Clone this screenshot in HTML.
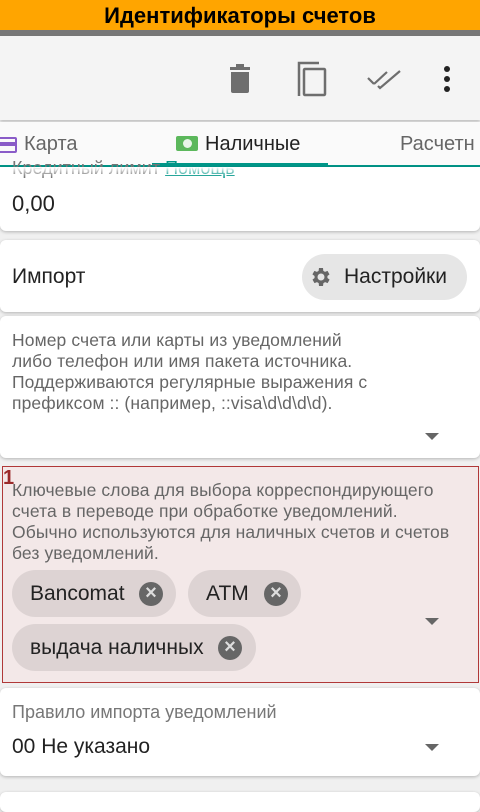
<!DOCTYPE html>
<html><head><meta charset="utf-8"><style>
*{margin:0;padding:0;box-sizing:border-box}
body{width:480px;height:800px;overflow:hidden;background:#f0f0f0;font-family:"Liberation Sans","DejaVu Sans",sans-serif;position:relative}
.a{position:absolute}
.card{position:absolute;left:0;width:480px;background:#fff;border-radius:6px;box-shadow:0 1px 3px rgba(0,0,0,.25)}
.t{position:absolute;white-space:nowrap}
.arr{position:absolute;width:0;height:0;border-left:7px solid transparent;border-right:7px solid transparent;border-top:7px solid #666}
.chip{position:absolute;height:47px;border-radius:24px;background:#ddd3d3;font-size:21px;color:#222;line-height:47px;padding-left:18px}
.x{position:absolute;top:12px;width:24px;height:24px;border-radius:50%;background:#666;color:#ddd;font-size:20px;line-height:23px;text-align:center;font-weight:bold}
.desc{font-size:17.5px;line-height:21px;color:#666;letter-spacing:0.1px}
</style></head><body>
<div class="a" style="left:0;top:0;width:480px;height:30px;background:#ffa500;text-align:center;font-size:22px;font-weight:bold;line-height:32px;color:#000">Идентификаторы счетов</div>
<div class="a" style="left:0;top:30px;width:480px;height:6px;background:#777"></div>
<div class="a" style="left:0;top:36px;width:480px;height:84px;background:#f4f4f4;box-shadow:0 2px 3px rgba(0,0,0,.2)"></div>
<svg class="a" style="left:0;top:36px" width="480" height="84">
<g fill="#6e6e6e">
<rect x="230" y="31" width="20" height="3"/><rect x="236" y="28" width="8" height="3"/>
<path d="M231 36h18v19a2 2 0 0 1-2 2h-14a2 2 0 0 1-2-2z"/>
</g>
<g fill="none" stroke="#6e6e6e" stroke-width="2.5">
<path d="M299 60V27h20"/><rect x="304" y="33" width="21" height="26" rx="1"/>
<path d="M368 42l6 6M374 48l13-12M378 50l2 2 20-17" stroke-width="2.2"/>
</g>
<g fill="#222"><circle cx="447" cy="33" r="3"/><circle cx="447" cy="43" r="3"/><circle cx="447" cy="53" r="3"/></g>
</svg>
<div class="a" style="left:0;top:122px;width:480px;height:45px;background:#fafafa"></div>
<div class="a" style="left:-2px;top:137px;width:19px;height:16px;border:2px solid #8a5cc8;border-radius:2px"><div style="margin-top:3px;height:4px;background:#8a5cc8"></div></div>
<div class="t" style="left:24px;top:133px;font-size:20px;color:#666">Карта</div>
<div class="a" style="left:176px;top:136px;width:22px;height:15px;background:#5cb85c;border-radius:2px"><div style="margin:3px auto;width:9px;height:9px;border-radius:50%;background:#e8f5e8"></div></div>
<div class="t" style="left:205px;top:133px;font-size:20px;color:#222">Наличные</div>
<div class="t" style="left:400px;top:133px;font-size:20px;color:#666">Расчетн</div>
<div class="a" style="left:0;top:165px;width:480px;height:2px;background:#009688"></div>
<div class="a" style="left:152px;top:163px;width:176px;height:3px;background:#009688"></div>
<div class="card" style="top:167px;height:64px;border-radius:0 0 6px 6px">
<div class="t" style="left:12px;top:-9px;font-size:18px;color:#777">Кредитный лимит <span style="color:#009688;text-decoration:underline">Помощь </span></div>
<div class="t" style="left:12px;top:24px;font-size:22px;color:#222">0,00</div>
</div>
<div class="a" style="left:0;top:167px;width:480px;height:10px;background:linear-gradient(#fff,rgba(255,255,255,0))"></div>
<div class="card" style="top:240px;height:72px">
<div class="t" style="left:12px;top:25px;font-size:21px;color:#222">Импорт</div>
<div class="a" style="left:302px;top:14px;width:165px;height:46px;border-radius:23px;background:#e6e6e6"></div>
<svg class="a" style="left:308px;top:25px" width="24" height="24" viewBox="0 0 24 24"><path fill="#666" d="M19.4 13a7.5 7.5 0 0 0 0-2l2.1-1.6-2-3.5-2.5 1a7 7 0 0 0-1.7-1L15 3h-4l-.4 2.9a7 7 0 0 0-1.7 1l-2.5-1-2 3.5L6.6 11a7.5 7.5 0 0 0 0 2l-2.1 1.6 2 3.5 2.5-1a7 7 0 0 0 1.7 1L11 21h4l.4-2.9a7 7 0 0 0 1.7-1l2.5 1 2-3.5zM13 15.5a3.5 3.5 0 1 1 0-7 3.5 3.5 0 0 1 0 7z"/></svg>
<div class="t" style="left:344px;top:25px;font-size:21px;color:#222">Настройки</div>
</div>
<div class="card" style="top:316px;height:142px">
<div class="a desc" style="left:12px;top:14px">Номер счета или карты из уведомлений<br>либо телефон или имя пакета источника.<br>Поддерживаются регулярные выражения с<br>префиксом :: (например, ::visa\d\d\d\d).</div>
<div class="arr" style="left:425px;top:117px"></div>
</div>
<div class="a" style="left:2px;top:466px;width:477px;height:217px;background:#f3e8e8;border:1px solid #b03838"></div>
<div class="t" style="left:3px;top:467px;font-size:20px;font-weight:bold;color:#9a2a2a">1</div>
<div class="a desc" style="left:12px;top:480px">Ключевые слова для выбора корреспондирующего<br>счета в переводе при обработке уведомлений.<br>Обычно используются для наличных счетов и счетов<br>без уведомлений.</div>
<div class="chip" style="left:12px;top:570px;width:164px">Bancomat<div class="x" style="left:127px">×</div></div>
<div class="chip" style="left:188px;top:570px;width:113px">ATM<div class="x" style="left:76px">×</div></div>
<div class="chip" style="left:12px;top:624px;width:244px">выдача наличных<div class="x" style="left:206px">×</div></div>
<div class="arr" style="left:425px;top:618px"></div>
<div class="card" style="top:688px;height:88px">
<div class="t" style="left:12px;top:14px;font-size:18px;color:#777">Правило импорта уведомлений</div>
<div class="t" style="left:12px;top:47px;font-size:21px;color:#222">00 Не указано</div>
<div class="arr" style="left:425px;top:56px"></div>
</div>
<div class="card" style="top:792px;height:20px"></div>
</body></html>
